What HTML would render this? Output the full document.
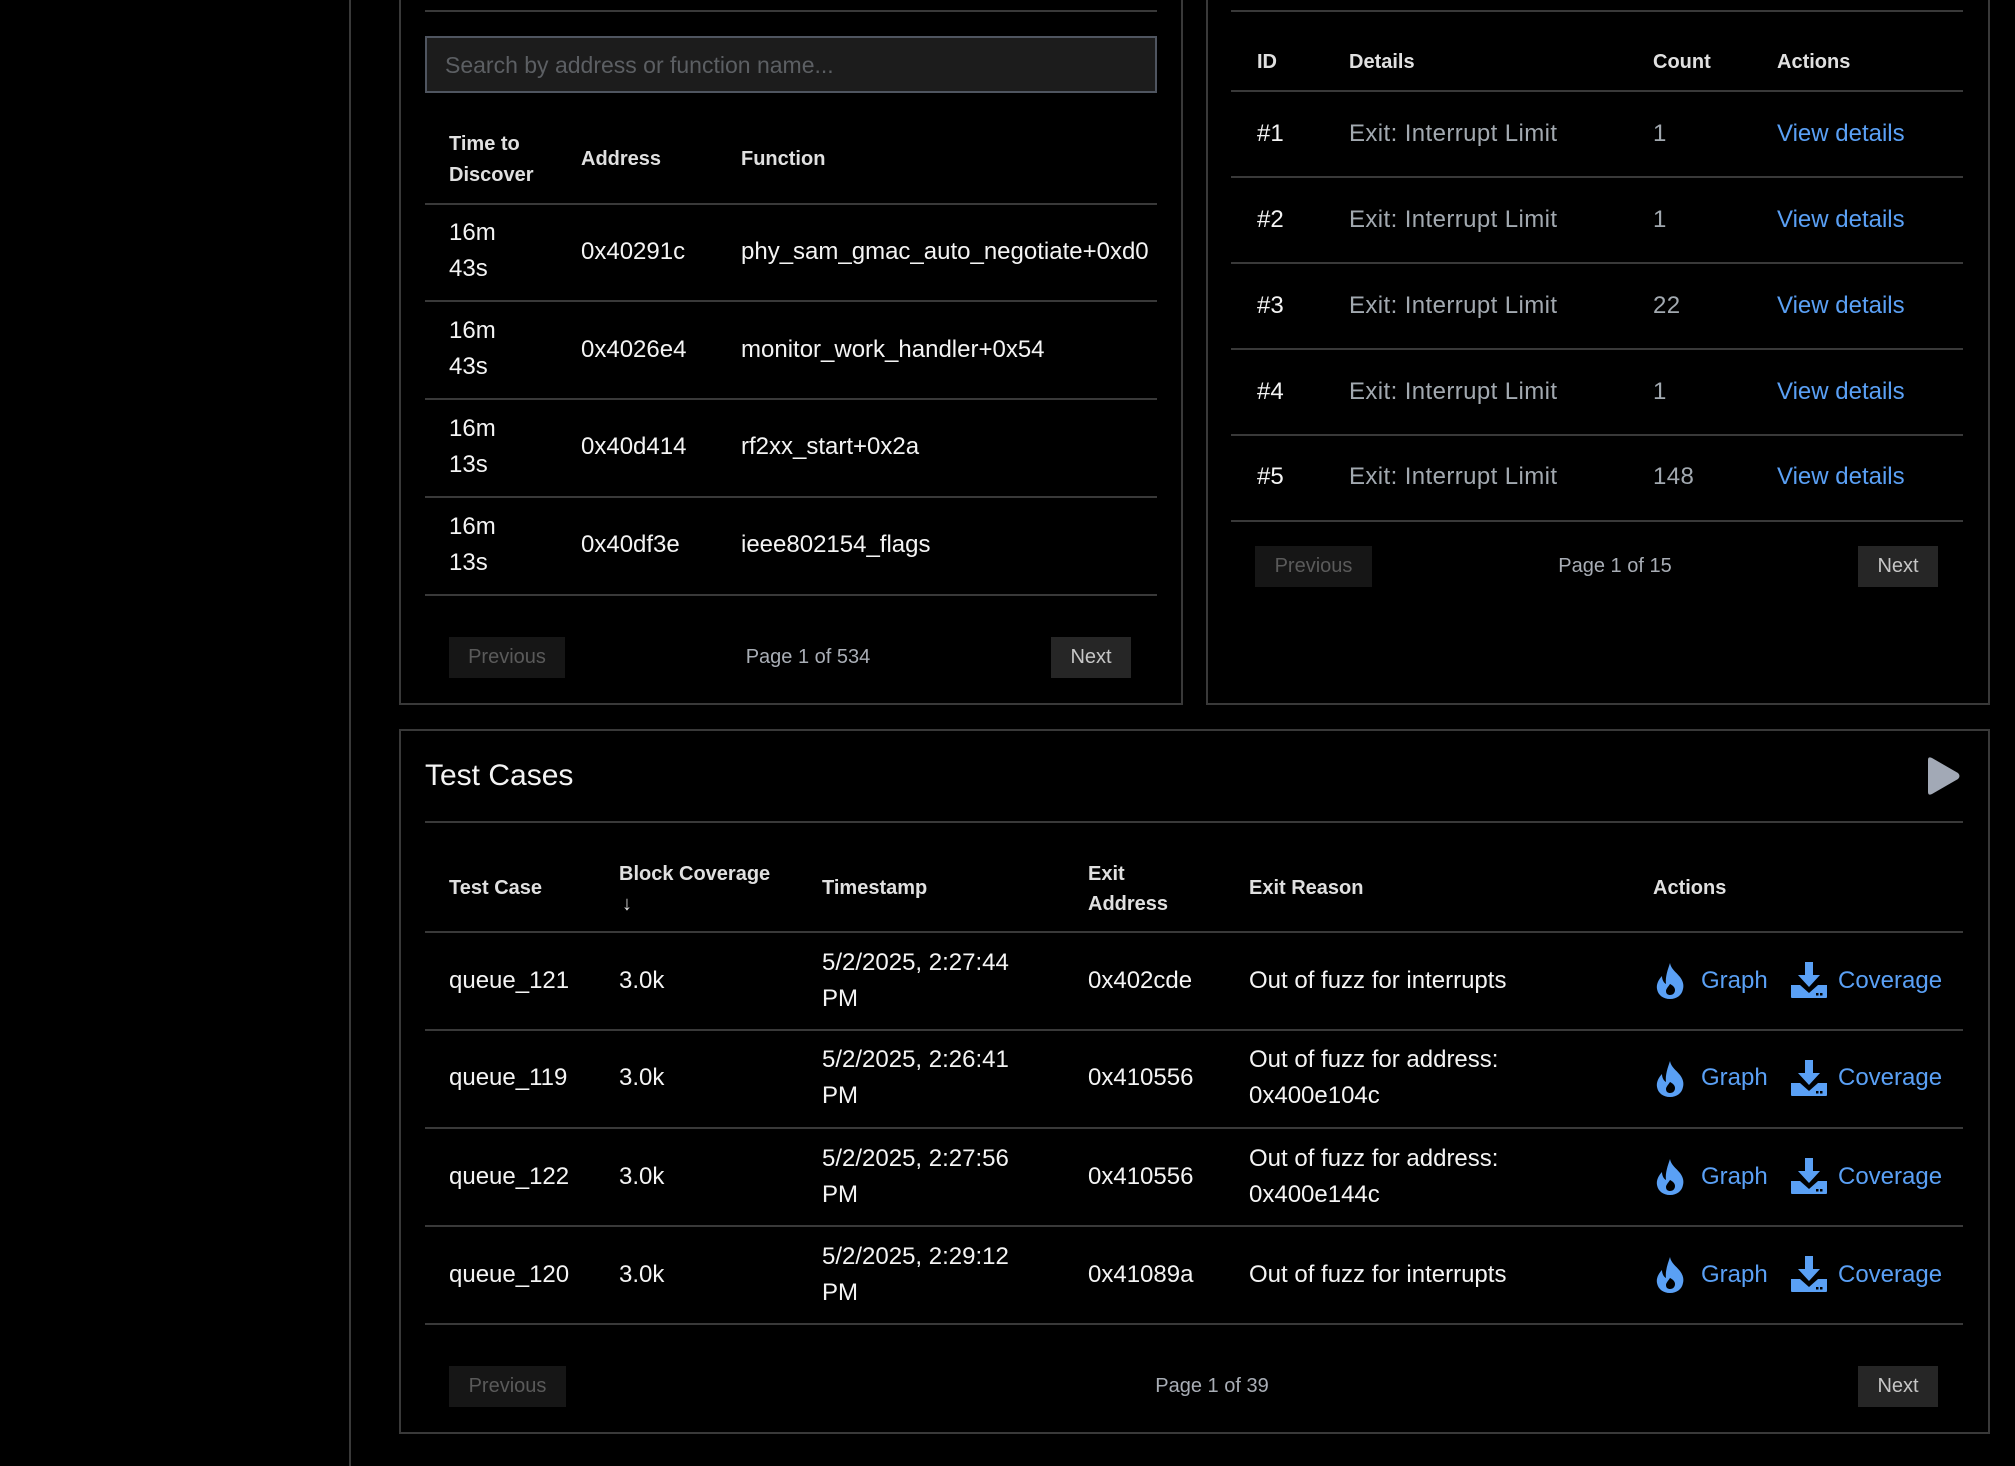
<!DOCTYPE html>
<html><head><meta charset="utf-8"><style>
*{margin:0;padding:0;box-sizing:border-box}
body{width:2015px;height:1466px;background:#000;position:relative;overflow:hidden;font-family:"Liberation Sans",sans-serif;color:#f4f4f4}
.a{position:absolute}
.t{position:absolute;white-space:nowrap;line-height:36px;font-size:24px;height:36px}
.h{font-weight:bold;font-size:20px;color:#e0e0e0}
.g{color:#a2a9b0;letter-spacing:0.4px}
.l{color:#5aa0f5}
.hl{position:absolute;height:2px;background:#393939}
.vl{position:absolute;width:2px;background:#393939}
.btn{position:absolute;height:41px;line-height:41px;font-size:20px;text-align:center}
.prev{background:#161616;color:#5a5a5a}
.next{background:#262626;color:#c6c6c6}
.pg{position:absolute;font-size:20px;color:#a8adb5;line-height:41px;white-space:nowrap;transform:translateX(-50%)}
</style></head><body>
<div class="vl" style="left:349px;top:0;height:1466px"></div>

<!-- Panel 1 -->
<div class="a" style="left:399px;top:-10px;width:784px;height:715px;border:2px solid #393939"></div>
<div class="hl" style="left:425px;top:10px;width:732px"></div>
<div class="a" style="left:425px;top:36px;width:732px;height:57px;background:#1c1c1c;border:2px solid #4f5560"></div>
<div class="t" style="left:445px;top:47px;color:#5c5f63;font-size:23px">Search by address or function name...</div>
<div class="t h" style="left:449px;top:126px">Time to</div>
<div class="t h" style="left:449px;top:157px">Discover</div>
<div class="t h" style="left:581px;top:141px">Address</div>
<div class="t h" style="left:741px;top:141px">Function</div>
<div class="hl" style="left:425px;top:203px;width:732px"></div>
<div class="t" style="left:449px;top:215px">16m</div><div class="t" style="left:449px;top:251px">43s</div>
<div class="t" style="left:581px;top:234px">0x40291c</div><div class="t" style="left:741px;top:234px">phy_sam_gmac_auto_negotiate+0xd0</div>
<div class="hl" style="left:425px;top:300px;width:732px"></div>
<div class="t" style="left:449px;top:313px">16m</div><div class="t" style="left:449px;top:349px">43s</div>
<div class="t" style="left:581px;top:332px">0x4026e4</div><div class="t" style="left:741px;top:332px">monitor_work_handler+0x54</div>
<div class="hl" style="left:425px;top:398px;width:732px"></div>
<div class="t" style="left:449px;top:411px">16m</div><div class="t" style="left:449px;top:447px">13s</div>
<div class="t" style="left:581px;top:429px">0x40d414</div><div class="t" style="left:741px;top:429px">rf2xx_start+0x2a</div>
<div class="hl" style="left:425px;top:496px;width:732px"></div>
<div class="t" style="left:449px;top:509px">16m</div><div class="t" style="left:449px;top:545px">13s</div>
<div class="t" style="left:581px;top:527px">0x40df3e</div><div class="t" style="left:741px;top:527px">ieee802154_flags</div>
<div class="hl" style="left:425px;top:594px;width:732px"></div>
<div class="btn prev" style="left:449px;top:637px;width:116px">Previous</div>
<div class="pg" style="left:808px;top:637px">Page 1 of 534</div>
<div class="btn next" style="left:1051px;top:637px;width:80px">Next</div>

<!-- Panel 2 -->
<div class="a" style="left:1206px;top:-10px;width:784px;height:715px;border:2px solid #393939"></div>
<div class="hl" style="left:1231px;top:10px;width:732px"></div>
<div class="t h" style="left:1257px;top:44px">ID</div>
<div class="t h" style="left:1349px;top:44px">Details</div>
<div class="t h" style="left:1653px;top:44px">Count</div>
<div class="t h" style="left:1777px;top:44px">Actions</div>
<div class="hl" style="left:1231px;top:90px;width:732px"></div>
<div class="t" style="left:1257px;top:116px">#1</div><div class="t g" style="left:1349px;top:116px">Exit: Interrupt Limit</div><div class="t g" style="left:1653px;top:116px">1</div><div class="t l" style="left:1777px;top:116px">View details</div>
<div class="hl" style="left:1231px;top:176px;width:732px"></div>
<div class="t" style="left:1257px;top:202px">#2</div><div class="t g" style="left:1349px;top:202px">Exit: Interrupt Limit</div><div class="t g" style="left:1653px;top:202px">1</div><div class="t l" style="left:1777px;top:202px">View details</div>
<div class="hl" style="left:1231px;top:262px;width:732px"></div>
<div class="t" style="left:1257px;top:288px">#3</div><div class="t g" style="left:1349px;top:288px">Exit: Interrupt Limit</div><div class="t g" style="left:1653px;top:288px">22</div><div class="t l" style="left:1777px;top:288px">View details</div>
<div class="hl" style="left:1231px;top:348px;width:732px"></div>
<div class="t" style="left:1257px;top:374px">#4</div><div class="t g" style="left:1349px;top:374px">Exit: Interrupt Limit</div><div class="t g" style="left:1653px;top:374px">1</div><div class="t l" style="left:1777px;top:374px">View details</div>
<div class="hl" style="left:1231px;top:434px;width:732px"></div>
<div class="t" style="left:1257px;top:459px">#5</div><div class="t g" style="left:1349px;top:459px">Exit: Interrupt Limit</div><div class="t g" style="left:1653px;top:459px">148</div><div class="t l" style="left:1777px;top:459px">View details</div>
<div class="hl" style="left:1231px;top:520px;width:732px"></div>
<div class="btn prev" style="left:1255px;top:546px;width:117px">Previous</div>
<div class="pg" style="left:1615px;top:546px">Page 1 of 15</div>
<div class="btn next" style="left:1858px;top:546px;width:80px">Next</div>

<!-- Panel 3 -->
<div class="a" style="left:399px;top:729px;width:1591px;height:705px;border:2px solid #393939"></div>
<div class="t" style="left:425px;top:758px;font-size:30px;font-weight:500">Test Cases</div>
<svg class="a" style="left:1924px;top:755px" width="38" height="42" viewBox="0 0 38 42"><path d="M4 5 Q4 1 8 3 L34 18 Q37 21 34 24 L8 39 Q4 41 4 37 Z" fill="#a2a9b6"/></svg>
<div class="hl" style="left:425px;top:821px;width:1538px"></div>
<div class="t h" style="left:449px;top:870px">Test Case</div>
<div class="t h" style="left:619px;top:856px">Block Coverage</div>
<div class="t h" style="left:622px;top:886px">↓</div>
<div class="t h" style="left:822px;top:870px">Timestamp</div>
<div class="t h" style="left:1088px;top:856px">Exit</div>
<div class="t h" style="left:1088px;top:886px">Address</div>
<div class="t h" style="left:1249px;top:870px">Exit Reason</div>
<div class="t h" style="left:1653px;top:870px">Actions</div>
<div class="hl" style="left:425px;top:931px;width:1538px"></div>

<div class="t" style="left:449px;top:963px">queue_121</div><div class="t" style="left:619px;top:963px">3.0k</div>
<div class="t" style="left:822px;top:945px">5/2/2025, 2:27:44</div><div class="t" style="left:822px;top:981px">PM</div>
<div class="t" style="left:1088px;top:963px">0x402cde</div><div class="t" style="left:1249px;top:963px">Out of fuzz for interrupts</div>
<div class="hl" style="left:425px;top:1029px;width:1538px"></div>

<div class="t" style="left:449px;top:1060px">queue_119</div><div class="t" style="left:619px;top:1060px">3.0k</div>
<div class="t" style="left:822px;top:1042px">5/2/2025, 2:26:41</div><div class="t" style="left:822px;top:1078px">PM</div>
<div class="t" style="left:1088px;top:1060px">0x410556</div>
<div class="t" style="left:1249px;top:1042px">Out of fuzz for address:</div><div class="t" style="left:1249px;top:1078px">0x400e104c</div>
<div class="hl" style="left:425px;top:1127px;width:1538px"></div>

<div class="t" style="left:449px;top:1159px">queue_122</div><div class="t" style="left:619px;top:1159px">3.0k</div>
<div class="t" style="left:822px;top:1141px">5/2/2025, 2:27:56</div><div class="t" style="left:822px;top:1177px">PM</div>
<div class="t" style="left:1088px;top:1159px">0x410556</div>
<div class="t" style="left:1249px;top:1141px">Out of fuzz for address:</div><div class="t" style="left:1249px;top:1177px">0x400e144c</div>
<div class="hl" style="left:425px;top:1225px;width:1538px"></div>

<div class="t" style="left:449px;top:1257px">queue_120</div><div class="t" style="left:619px;top:1257px">3.0k</div>
<div class="t" style="left:822px;top:1239px">5/2/2025, 2:29:12</div><div class="t" style="left:822px;top:1275px">PM</div>
<div class="t" style="left:1088px;top:1257px">0x41089a</div><div class="t" style="left:1249px;top:1257px">Out of fuzz for interrupts</div>
<div class="hl" style="left:425px;top:1323px;width:1538px"></div>

<!-- action icons -->
<svg width="0" height="0" style="position:absolute"><defs>
<symbol id="fl" viewBox="0 0 28 36"><path fill="#5aa0f5" fill-rule="evenodd" d="M14 0 C15 6 20 9 24 14 C27 18 28 22 27 26 C26 32 21 36 14 36 C7 36 2 32 1 26 C0 21 3 16 6 13 C6 17 8 20 10 21 C9 14 12 6 14 0 Z M14 21 C12 24 10 26 10 28 C10 31 12 32 14 32 C17 32 19 30 19 27 C19 24 16 22 14 21 Z"/></symbol>
<symbol id="dl" viewBox="0 0 36 36"><path fill="#5aa0f5" d="M14 0 H22 V13 H29 L18 25 L7 13 H14 Z"/><path fill="#5aa0f5" d="M0 23 H9 L18 31 L27 23 H36 V35 Q36 36 35 36 H1 Q0 36 0 35 Z"/><rect x="25" y="31" width="2.5" height="2.5" fill="#000"/><rect x="29" y="31" width="2.5" height="2.5" fill="#000"/></symbol>
</defs></svg>
<svg class="a" style="left:1656px;top:963px" width="28" height="36"><use href="#fl"/></svg>
<div class="t l" style="left:1701px;top:963px">Graph</div>
<svg class="a" style="left:1791px;top:962px" width="36" height="36"><use href="#dl"/></svg>
<div class="t l" style="left:1838px;top:963px">Coverage</div>

<svg class="a" style="left:1656px;top:1061px" width="28" height="36"><use href="#fl"/></svg>
<div class="t l" style="left:1701px;top:1060px">Graph</div>
<svg class="a" style="left:1791px;top:1060px" width="36" height="36"><use href="#dl"/></svg>
<div class="t l" style="left:1838px;top:1060px">Coverage</div>

<svg class="a" style="left:1656px;top:1159px" width="28" height="36"><use href="#fl"/></svg>
<div class="t l" style="left:1701px;top:1159px">Graph</div>
<svg class="a" style="left:1791px;top:1158px" width="36" height="36"><use href="#dl"/></svg>
<div class="t l" style="left:1838px;top:1159px">Coverage</div>

<svg class="a" style="left:1656px;top:1257px" width="28" height="36"><use href="#fl"/></svg>
<div class="t l" style="left:1701px;top:1257px">Graph</div>
<svg class="a" style="left:1791px;top:1256px" width="36" height="36"><use href="#dl"/></svg>
<div class="t l" style="left:1838px;top:1257px">Coverage</div>

<div class="btn prev" style="left:449px;top:1366px;width:117px">Previous</div>
<div class="pg" style="left:1212px;top:1366px">Page 1 of 39</div>
<div class="btn next" style="left:1858px;top:1366px;width:80px">Next</div>
</body></html>
